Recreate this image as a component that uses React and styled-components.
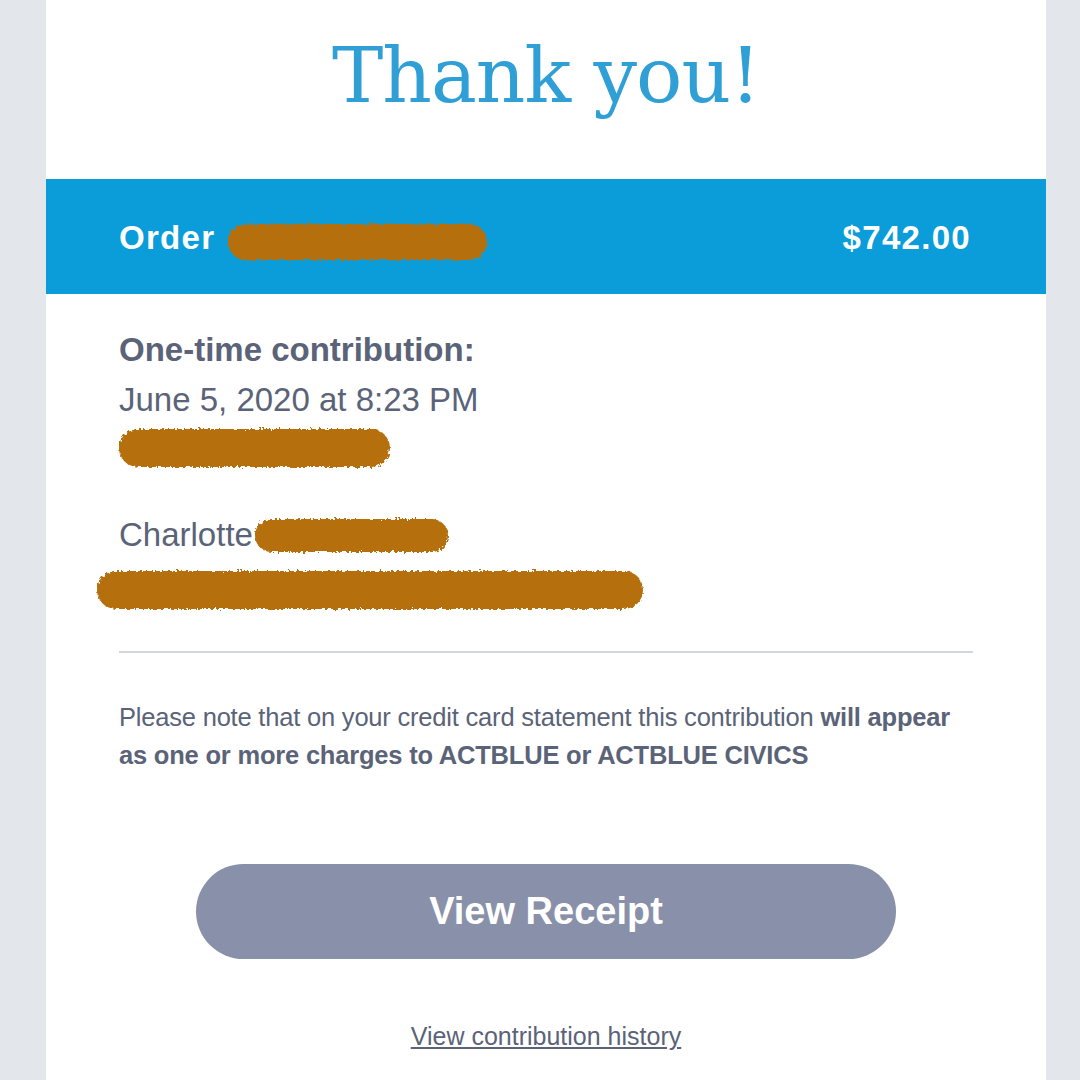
import React from 'react'
import styled, { createGlobalStyle } from 'styled-components'

const GlobalStyle = createGlobalStyle`
    html, body {
        margin:0;
        padding:0;
        background:#e3e7eb;
    }
    body {
        font-family:"Liberation Sans", Arial, sans-serif;
    }
`;

const Page = styled.div`
    width:1080px;
    height:1080px;
    overflow:hidden;
    display:flex;
    padding-left:46px;
    box-sizing:border-box;
`;

const Card = styled.div`
    width:1000px;
    background:#fff;
    display:flex;
    flex-direction:column;
`;

const Heading = styled.h1`
    margin:0;
    height:179px;
    box-sizing:border-box;
    padding-top:31px;
    text-align:center;
    font-family:"DejaVu Serif", "Liberation Serif", serif;
    font-weight:400;
    font-size:77px;
    letter-spacing:-1px;
    color:#2f9fd6;
`;

const OrderBar = styled.div`
    height:115px;
    background:#0a9dd9;
    display:flex;
    align-items:center;
    justify-content:space-between;
    padding:2px 75px 0 73px;
    box-sizing:border-box;
    color:#fff;
    font-weight:700;
    font-size:33px;
    letter-spacing:1.3px;
`;

const OrderLabel = styled.div`
    display:flex;
    align-items:center;
    gap:13px;
`;

const Scribble = styled.span`
    display:inline-block;
    flex-shrink:0;
    width:${p => p.w}px;
    height:${p => p.h}px;
    margin-left:${p => p.ml || 0}px;
    margin-top:${p => p.dy || 0}px;
    background:#b5700c;
    border-radius:${p => p.h / 2}px;
    filter:url(#rough);
`;

const Body = styled.div`
    padding:36px 73px 0 73px;
    color:#5a6377;
`;

const Label = styled.div`
    font-weight:700;
    font-size:33px;
    line-height:40px;
`;

const Line = styled.div`
    font-size:33px;
    line-height:40px;
    margin-top:${p => p.mt || 0}px;
    display:flex;
    align-items:center;
`;

const WideScribbleRow = styled.div`
    margin-left:-22px;
    margin-top:${p => p.mt || 0}px;
    height:${p => p.h}px;
    display:flex;
    align-items:center;
`;

const Divider = styled.hr`
    border:none;
    height:2px;
    background:#d3d6de;
    margin:39px 0 0 0;
`;

const Note = styled.p`
    margin:45px 0 0 0;
    font-size:25.5px;
    line-height:38px;
    letter-spacing:-0.2px;
    b { font-weight:700; }
`;

const ButtonRow = styled.div`
    display:flex;
    justify-content:center;
    margin-top:90px;
`;

const Button = styled.button`
    width:700px;
    height:95px;
    border:none;
    border-radius:48px;
    background:#8891a9;
    color:#fff;
    font-family:"Liberation Sans", Arial, sans-serif;
    font-weight:700;
    font-size:38px;
    cursor:pointer;
`;

const HistoryLink = styled.a`
    display:block;
    text-align:center;
    margin-top:63px;
    font-size:25px;
    color:#5a6377;
    text-decoration:underline;
`;

const RoughFilter = () => (
    <svg width="0" height="0" style={{ position: 'absolute' }}>
        <filter id="rough">
            <feTurbulence type="fractalNoise" baseFrequency="0.35" numOctaves="2" result="noise" />
            <feDisplacementMap in="SourceGraphic" in2="noise" scale="6" />
        </filter>
    </svg>
);

const App = () => {
    return (
        <Page>
            <GlobalStyle />
            <RoughFilter />
            <Card>
                <Heading>Thank you!</Heading>
                <OrderBar>
                    <OrderLabel>
                        Order
                        <Scribble w={259} h={36} dy={8} />
                    </OrderLabel>
                    <span>$742.00</span>
                </OrderBar>
                <Body>
                    <Label>One-time contribution:</Label>
                    <Line mt={10}>June 5, 2020 at 8:23 PM</Line>
                    <Line mt={9}><Scribble w={271} h={38} /></Line>
                    <Line mt={48}>Charlotte<Scribble w={193} h={33} ml={2} /></Line>
                    <WideScribbleRow mt={13} h={44}>
                        <Scribble w={546} h={38} />
                    </WideScribbleRow>
                    <Divider />
                    <Note>
                        Please note that on your credit card statement this contribution <b>will appear as one or more charges to ACTBLUE or ACTBLUE CIVICS</b>
                    </Note>
                    <ButtonRow>
                        <Button>View Receipt</Button>
                    </ButtonRow>
                    <HistoryLink href="#">View contribution history</HistoryLink>
                </Body>
            </Card>
        </Page>
    )
}

export default App
